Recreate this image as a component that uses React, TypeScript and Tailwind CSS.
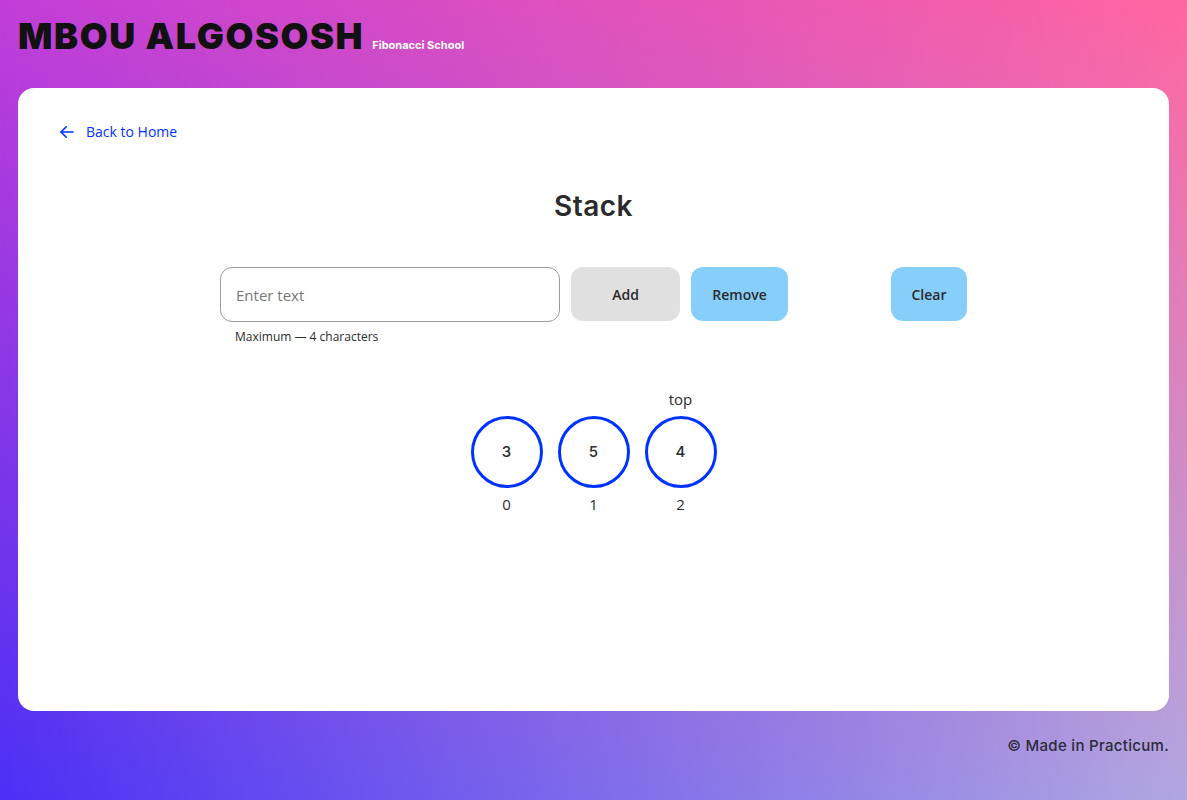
import React, { useState } from 'react';

const ITEMS = ['3', '5', '4'];

const Circle: React.FC<{ value: string; index: number; head?: string }> = ({ value, index, head }) => (
  <div className="flex flex-col items-center w-[72px]">
    <span className="h-[24px] text-[15px] text-[#2b2b2b] leading-[24px] font-['Open_Sans',sans-serif]">{head}</span>
    <div className="mt-[5px] w-[72px] h-[72px] rounded-full border-[3px] border-[#0032ff] flex items-center justify-center text-[15px] font-medium text-[#2b2b2b] font-['Inter',sans-serif]">
      {value}
    </div>
    <span className="mt-[6px] text-[15px] text-[#2b2b2b] leading-[20px] font-['Open_Sans',sans-serif]">{index}</span>
  </div>
);

export default function App() {
  const [text, setText] = useState('');

  return (
    <div className="relative min-h-[800px] w-full overflow-hidden bg-[linear-gradient(to_bottom,#c23ed8,#4a30f5)]">
      <div className="absolute inset-0 bg-[linear-gradient(to_bottom,#ff66a0,#b0a8e0)] [mask-image:linear-gradient(to_right,transparent,black)]" />
      <div className="relative flex flex-col px-[18px]">
        <header className="h-[88px] flex items-end pb-[34px]">
          <h1 className="text-[36px] leading-none font-black tracking-[1.6px] text-[#111] font-['Inter',sans-serif]">MBOU ALGOSOSH</h1>
          <span className="ml-[8px] mb-[1px] text-[11px] font-bold text-white font-['Inter',sans-serif]">Fibonacci School</span>
        </header>

        <main className="h-[623px] bg-white rounded-[16px] flex flex-col px-[40px] pt-[33px]">
          <a href="#" className="flex items-center gap-[10px] text-[14px] font-medium text-[#0032ff] font-['Open_Sans',sans-serif] w-fit">
            <svg width="18" height="18" viewBox="0 0 24 24" fill="none" stroke="#0032ff" strokeWidth="2.2" strokeLinecap="round" strokeLinejoin="round">
              <path d="M20 12H4" />
              <path d="M11 5l-7 7 7 7" />
            </svg>
            Back to Home
          </a>

          <h2 className="mt-[43px] text-center text-[28px] font-semibold tracking-[0.5px] text-[#2b2b2b] font-['Inter',sans-serif]">Stack</h2>

          <div className="mt-[40px] flex justify-center">
            <div className="flex items-start w-[747px]">
              <div className="flex flex-col">
                <input
                  value={text}
                  onChange={(e) => setText(e.target.value)}
                  maxLength={4}
                  placeholder="Enter text"
                  className="w-[340px] h-[55px] rounded-[12px] border border-[#999] px-[15px] text-[15px] text-[#2b2b2b] placeholder:text-[#777] outline-none font-['Open_Sans',sans-serif]"
                />
                <span className="mt-[6px] pl-[15px] text-[12px] text-[#2b2b2b] font-['Open_Sans',sans-serif]">Maximum — 4 characters</span>
              </div>
              <button className="ml-[11px] w-[109px] h-[54px] rounded-[12px] bg-[#e0e0e0] text-[14px] font-semibold text-[#2b2b2b] font-['Open_Sans',sans-serif]">Add</button>
              <button className="ml-[11px] w-[97px] h-[54px] rounded-[12px] bg-[#87cefa] text-[14px] font-semibold text-[#2b2b2b] font-['Open_Sans',sans-serif]">Remove</button>
              <button className="ml-[103px] w-[76px] h-[54px] rounded-[12px] bg-[#87cefa] text-[14px] font-semibold text-[#2b2b2b] font-['Open_Sans',sans-serif]">Clear</button>
            </div>
          </div>

          <div className="mt-[41px] flex justify-center gap-[15px]">
            {ITEMS.map((v, i) => (
              <Circle key={i} value={v} index={i} head={i === ITEMS.length - 1 ? 'top' : undefined} />
            ))}
          </div>
        </main>

        <footer className="flex justify-end pt-[24px]">
          <span className="text-[15px] font-medium tracking-[0.3px] text-[#2b2b3b] font-['Inter',sans-serif]">© Made in Practicum.</span>
        </footer>
      </div>
    </div>
  );
}
